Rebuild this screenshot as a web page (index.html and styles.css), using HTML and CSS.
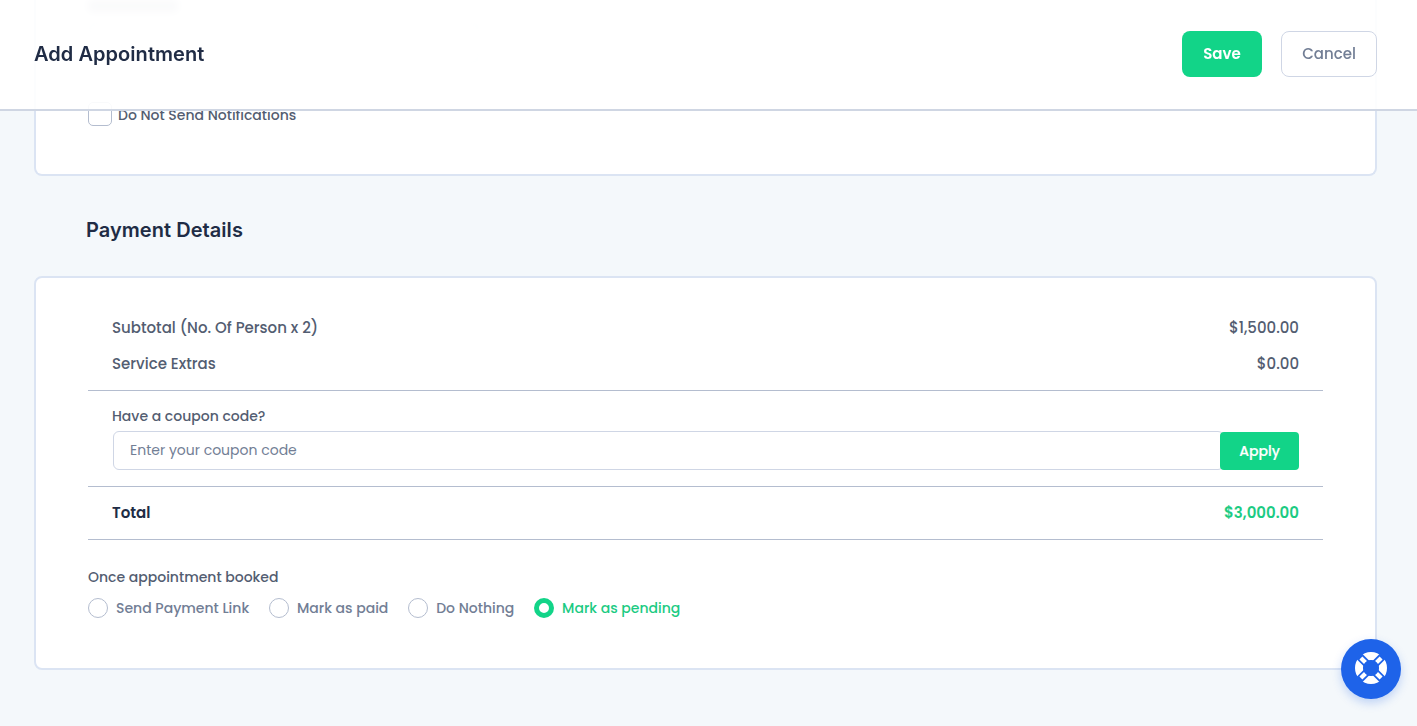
FILE: index.html
```
<!DOCTYPE html>
<html lang="en">
<head>
  <meta charset="utf-8">
  <title>Add Appointment</title>
  <link rel="stylesheet" href="styles.css">
</head>
<body>
  <header class="header">
    <h1>Add Appointment</h1>
    <div class="header-actions">
      <button class="btn btn-save">Save</button>
      <button class="btn btn-cancel">Cancel</button>
    </div>
  </header>

  <main class="content">
    <section class="card card-notes">
      <div class="note-label"></div>
      <div class="note-field"></div>
      <label class="checkbox">
        <span class="checkbox-box"></span>
        Do Not Send Notifications
      </label>
    </section>

    <h2>Payment Details</h2>

    <section class="card card-payment">
      <div class="rows">
        <div class="row"><span>Subtotal (No. Of Person x 2)</span><span>$1,500.00</span></div>
        <div class="row"><span>Service Extras</span><span>$0.00</span></div>
      </div>

      <div class="coupon">
        <label for="coupon">Have a coupon code?</label>
        <div class="coupon-group">
          <input type="text" id="coupon" placeholder="Enter your coupon code">
          <button class="btn-apply">Apply</button>
        </div>
      </div>

      <div class="row total"><span>Total</span><span class="amount">$3,000.00</span></div>

      <div class="booked">
        <p>Once appointment booked</p>
        <div class="radios">
          <label class="radio"><input type="radio" name="booked">Send Payment Link</label>
          <label class="radio"><input type="radio" name="booked">Mark as paid</label>
          <label class="radio"><input type="radio" name="booked">Do Nothing</label>
          <label class="radio"><input type="radio" name="booked" checked><span>Mark as pending</span></label>
        </div>
      </div>
    </section>
  </main>

  <button class="help" aria-label="Help">
    <svg width="34" height="34" viewBox="0 0 34 34">
      <circle cx="17" cy="17" r="12" fill="none" stroke="#fff" stroke-width="8"/>
      <path d="M5 5l24 24M29 5L5 29" stroke="#1e63e9" stroke-width="7.8"/>
      <path d="M6.9 6.9l4.6 4.6M27.1 6.9l-4.6 4.6M6.9 27.1l4.6-4.6M27.1 27.1l-4.6-4.6" stroke="#fff" stroke-width="4.2"/>
      <circle cx="17" cy="17" r="7.8" fill="#1e63e9"/>
    </svg>
  </button>
</body>
</html>
```
FILE: styles.css
```
* {
  box-sizing: border-box;
}

body {
  margin: 0;
  font-family: Poppins, Inter, sans-serif;
  font-size: 14px;
  font-weight: 500;
  color: #535d71;
  background-color: #f4f8fb;
  height: 726px;
  overflow: hidden;
}

button, input {
  font-family: inherit;
}

h1, h2 {
  margin: 0;
  font-family: Inter, sans-serif;
  font-size: 20px;
  font-weight: 600;
  letter-spacing: 0.05px;
  color: #202c45;
}

.header {
  position: fixed;
  top: 0;
  left: 0;
  right: 0;
  z-index: 10;
  display: flex;
  align-items: center;
  justify-content: space-between;
  height: 111px;
  padding: 0 40px 2px 34px;
  background-color: rgba(255, 255, 255, 0.92);
  border-bottom: 2px solid #cfd6e3;
}

.header-actions {
  display: flex;
  gap: 19px;
}

.btn {
  height: 46px;
  padding: 0;
  border-radius: 8px;
  font-size: 15px;
}

.btn-save {
  width: 80px;
  border: none;
  background-color: #12d488;
  color: #fff;
  font-weight: 600;
}

.btn-cancel {
  width: 96px;
  border: 1px solid #cfd6e5;
  background-color: #fff;
  color: #727e95;
  font-weight: 500;
}

.content {
  padding: 0 40px 0 34px;
}

.card {
  background-color: #fff;
  border: 2px solid #dbe4f3;
  border-radius: 8px;
  padding: 0 52px;
}

.card-notes {
  height: 176px;
  border-top: none;
  border-radius: 0 0 8px 8px;
}

/* scrolled under the header */
.note-label {
  width: 90px;
  height: 12px;
  background-color: #b4bac6;
  filter: blur(4px);
}

.note-field {
  width: 392px;
  height: 42px;
  margin-top: 10px;
  border: 3px solid #dfe4ee;
  border-radius: 6px;
  filter: blur(3px);
}

.checkbox {
  display: flex;
  align-items: center;
  gap: 6px;
  height: 26px;
  margin-top: 38px;
  line-height: 20px;
}

.checkbox-box {
  width: 24px;
  height: 24px;
  margin-bottom: 2px;
  border: 1px solid #b4bdcf;
  border-radius: 5px;
}

h2 {
  padding: 40px 52px 32px;
  line-height: 28px;
}

.card-payment {
  height: 394px;
  padding-top: 32px;
}

.rows {
  padding-bottom: 8px;
}

.row {
  display: flex;
  align-items: center;
  justify-content: space-between;
  height: 36px;
  padding: 0 24px 2px;
  font-size: 15px;
}

.coupon {
  height: 97px;
  padding: 15px 24px 0;
  border-top: 1px solid #b4bdcf;
  border-bottom: 1px solid #b4bdcf;
}

.coupon label {
  display: block;
  line-height: 21px;
}

.coupon-group {
  display: flex;
  align-items: flex-end;
  margin-top: 4px;
  padding-left: 1px;
}

.coupon input {
  flex: 1;
  height: 39px;
  margin-right: -4px;
  padding: 0 16px;
  border: 1px solid #cfd6e5;
  border-radius: 6px;
  font-size: 14px;
}

.coupon input::placeholder {
  color: #727e95;
}

.btn-apply {
  position: relative;
  width: 79px;
  height: 38px;
  padding: 0;
  border: none;
  border-radius: 4px;
  background-color: #12d488;
  color: #fff;
  font-size: 14px;
  font-weight: 500;
  -webkit-text-stroke: 0.2px #fff;
}

.total {
  height: 53px;
  border-bottom: 1px solid #b4bdcf;
  color: #202c45;
  font-weight: 600;
}

.amount {
  color: #1ccb83;
}

.booked p {
  margin: 27px 0 10px;
  line-height: 21px;
}

.radios {
  display: flex;
  gap: 19.8px;
}

.radio {
  display: flex;
  align-items: center;
  gap: 8px;
  color: #727e95;
  line-height: 20px;
}

.radio input {
  appearance: none;
  width: 20px;
  height: 20px;
  margin: 0;
  border: 1px solid #b4bdcf;
  border-radius: 50%;
}

.radio input:checked {
  border: 5px solid #12d488;
}

.radio input:checked + span {
  color: #1ccb83;
}

.help {
  position: fixed;
  right: 16px;
  bottom: 27px;
  display: flex;
  align-items: center;
  justify-content: center;
  width: 60px;
  height: 60px;
  padding: 0 0 2px;
  border: none;
  border-radius: 50%;
  background-color: #1e63e9;
  box-shadow: 0 4px 10px rgba(30, 99, 233, 0.25);
}
```
